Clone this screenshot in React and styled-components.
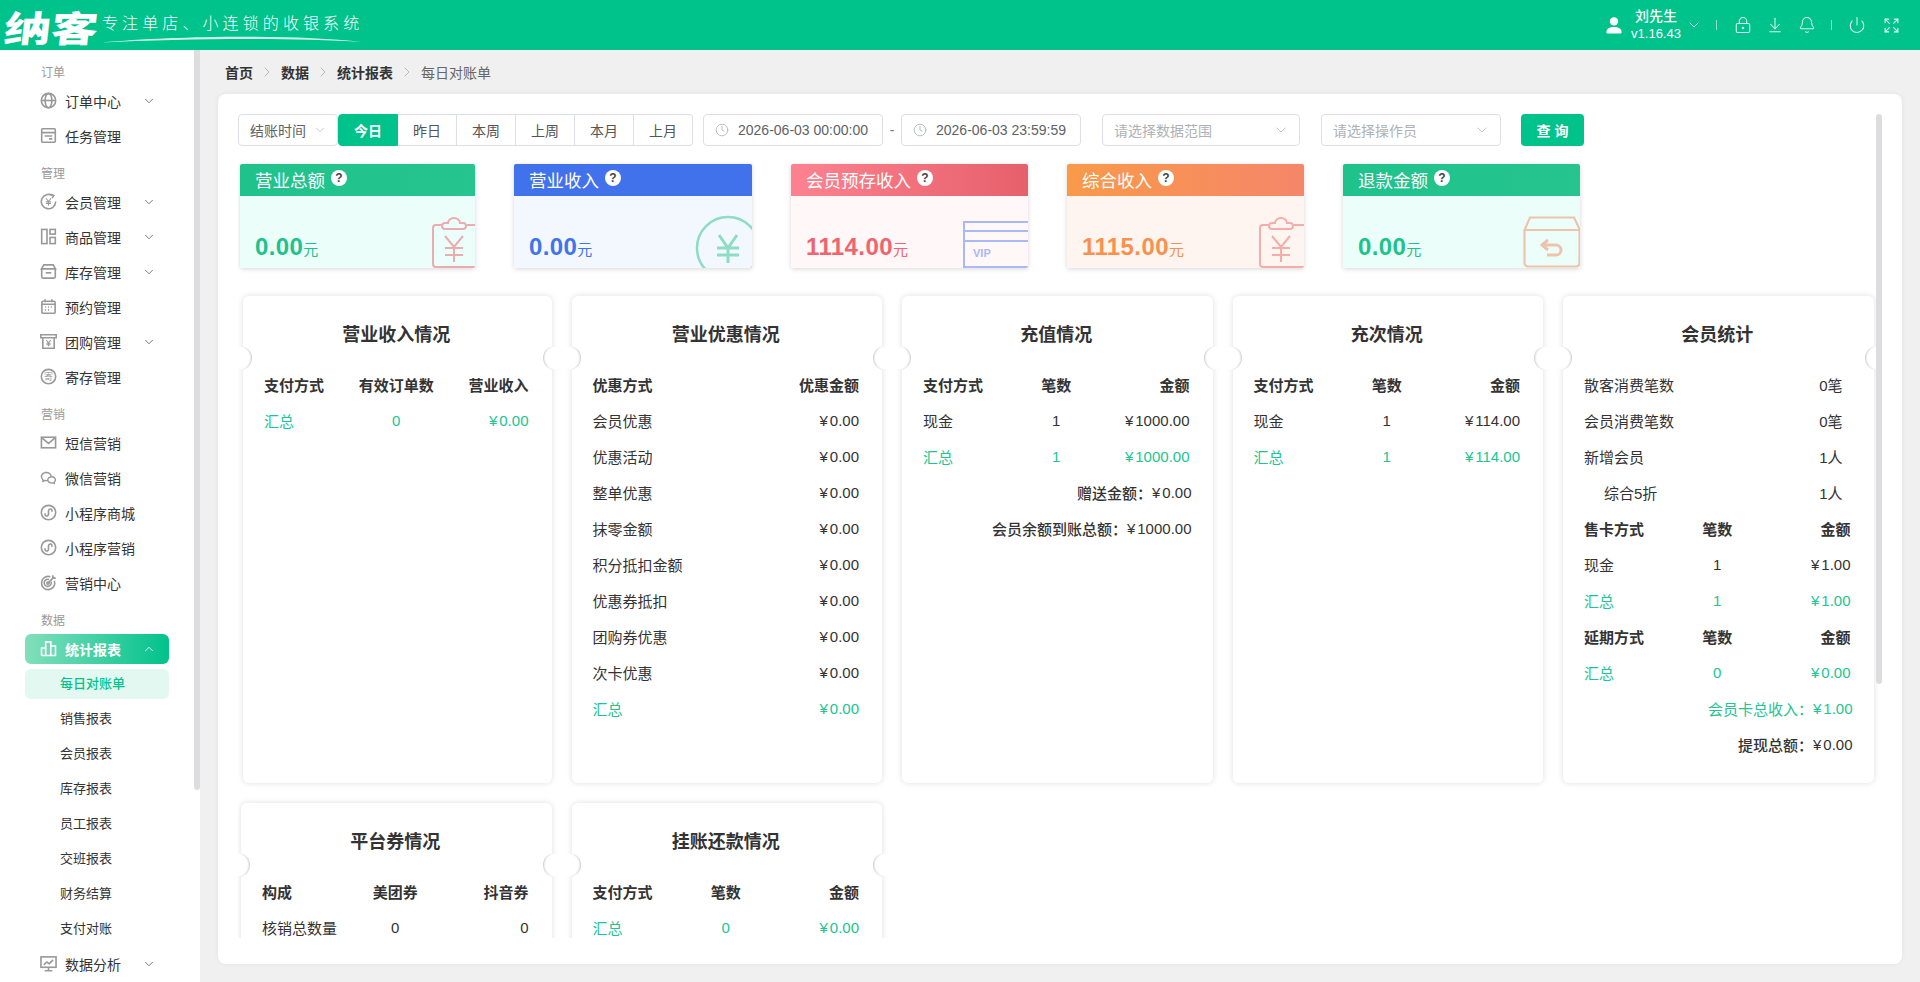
import React from 'react';
import styled, { createGlobalStyle } from 'styled-components';
import {
  ArrowDownToLine,
  Bell,
  ChevronDown,
  ChevronRight,
  ChevronUp,
  Clock,
  Expand,
  LockKeyhole,
  Power,
} from 'lucide-react';
import { RiWechatLine } from 'react-icons/ri';

const GREEN = '#00c28b';
const TEXT_GREEN = '#20c592';

const GlobalStyle = createGlobalStyle`
  * {
    box-sizing: border-box;
  }
  html, body {
    margin: 0;
    padding: 0;
    height: 100%;
    overflow: hidden;
  }
  body {
    font-family: "Liberation Sans", "Noto Sans CJK SC", sans-serif;
    font-size: 14px;
    color: #333;
    background: #f0f0f0;
  }
`;

/* ---------- sidebar icons ---------- */

const Glyph = styled.svg.attrs({ viewBox: '0 0 18 18', fill: 'none', stroke: 'currentColor' })`
  width: 17px;
  height: 17px;
  flex: none;
  stroke-width: 1.7;
`;

const UserGlyph = styled.svg.attrs({ viewBox: '0 0 16 17' })`
  width: 16px;
  height: 17px;
  flex: none;
  fill: #fff;
`;

const sideIcons = {
  globe: (
    <Glyph>
      <circle cx="9" cy="9" r="7.6" />
      <ellipse cx="9" cy="9" rx="3.6" ry="7.6" />
      <path d="M1.5 9H16.5" />
    </Glyph>
  ),
  task: (
    <Glyph>
      <rect x="1.8" y="1.8" width="14.4" height="14.4" rx="1" />
      <path d="M1.8 6H16.2M5 9.6H13M9.5 12.6H13" />
    </Glyph>
  ),
  member: (
    <Glyph>
      <path d="M13 2.6A7.6 7.6 0 1 0 16.6 9" />
      <path d="M11.6 1.2L14.6 2.8L12.8 5.4" />
      <path d="M6.4 5.6L9 9L11.6 5.6M9 9V13.4M6.4 9.4H11.6M6.4 11.2H11.6" strokeWidth="1.1" />
    </Glyph>
  ),
  goods: (
    <Glyph>
      <rect x="1.8" y="1.5" width="5.6" height="15" />
      <rect x="10.6" y="1.5" width="5.6" height="5" />
      <rect x="10.6" y="10" width="5.6" height="6.5" />
    </Glyph>
  ),
  stock: (
    <Glyph>
      <path d="M4 2H14L16.4 6.2H1.6Z" />
      <path d="M1.8 6.2V14.6A1.4 1.4 0 0 0 3.2 16H14.8A1.4 1.4 0 0 0 16.2 14.6V6.2" />
      <path d="M6 10.4H12" />
    </Glyph>
  ),
  calendar: (
    <Glyph>
      <rect x="2" y="3.4" width="14" height="12.8" rx="1.2" />
      <path d="M5.4 1.4V4.4M12.6 1.4V4.4M2 6.6H16" />
      <path d="M5.5 9.6H6.5M8.5 9.6H9.5M11.5 9.6H12.5M5.5 12.6H6.5M8.5 12.6H9.5" />
    </Glyph>
  ),
  group: (
    <Glyph>
      <path d="M0.8 1.8H17.2V5H0.8Z" />
      <path d="M3 5V16.2H15V5" />
      <path d="M6.6 7.4L9 10.4L11.4 7.4M9 10.4V14M6.8 10.8H11.2M6.8 12.4H11.2" strokeWidth="1.1" />
    </Glyph>
  ),
  deposit: (
    <Glyph>
      <circle cx="9" cy="9" r="7.6" />
      <text x="9" y="12.2" fontSize="9.5" textAnchor="middle" fill="currentColor" stroke="none">寄</text>
    </Glyph>
  ),
  mail: (
    <Glyph>
      <rect x="1.5" y="3.4" width="15" height="11.2" />
      <path d="M2 4L9 10L16 4" />
    </Glyph>
  ),
  mini: (
    <Glyph>
      <circle cx="9" cy="9" r="7.6" />
      <path d="M5.8 9.8C4.9 10.7 5.2 12.4 6.8 12.7C8.3 12.9 9 11.7 9 10.5V7.5C9 6.3 9.8 5.1 11.3 5.3C12.8 5.6 13.1 7.3 12.2 8.2" />
    </Glyph>
  ),
  target: (
    <Glyph>
      <path d="M15.2 7.2A7 7 0 1 1 11 3" />
      <path d="M11.8 8.2A3.8 3.8 0 1 1 9.6 5.8" />
      <circle cx="8.4" cy="9.6" r="1.2" />
      <path d="M8.4 9.6L15 3M13.6 1.4V4.4H16.6" />
    </Glyph>
  ),
  bars: (
    <Glyph>
      <path d="M1.6 16.4V8.4H6V16.4M6 16.4V2H11.4V16.4M11.4 16.4V6.4H16.4V16.4H1.6" />
    </Glyph>
  ),
  monitor: (
    <Glyph>
      <rect x="1" y="2" width="16" height="11" />
      <path d="M9 13V16.4M5 16.6H13M4 10.4L7.2 7.4L9.8 9.2L13.8 5.2" />
    </Glyph>
  ),
  wechat: <RiWechatLine size={20} />,
};

/* ---------- data ---------- */

const nav = [
  {
    label: '订单',
    items: [
      { icon: 'globe', text: '订单中心', arrow: true },
      { icon: 'task', text: '任务管理' },
    ],
  },
  {
    label: '管理',
    items: [
      { icon: 'member', text: '会员管理', arrow: true },
      { icon: 'goods', text: '商品管理', arrow: true },
      { icon: 'stock', text: '库存管理', arrow: true },
      { icon: 'calendar', text: '预约管理' },
      { icon: 'group', text: '团购管理', arrow: true },
      { icon: 'deposit', text: '寄存管理' },
    ],
  },
  {
    label: '营销',
    items: [
      { icon: 'mail', text: '短信营销' },
      { icon: 'wechat', text: '微信营销' },
      { icon: 'mini', text: '小程序商城' },
      { icon: 'mini', text: '小程序营销' },
      { icon: 'target', text: '营销中心' },
    ],
  },
];

const reportSubs = ['每日对账单', '销售报表', '会员报表', '库存报表', '员工报表', '交班报表', '财务结算', '支付对账'];

const stats = [
  { title: '营业总额', value: '0.00', head: 'linear-gradient(90deg,#20c28c,#26c48f)', body: '#ecfef9', color: '#20c28c', art: 'clip', tone: '#e9adb0' },
  { title: '营业收入', value: '0.00', head: '#4172eb', body: '#f3f8ff', color: '#3f74ee', art: 'coin', tone: '#8ddcc3' },
  { title: '会员预存收入', value: '1114.00', head: 'linear-gradient(90deg,#fd8290,#e6606b)', body: '#fff7f8', color: '#ee6570', art: 'vip', tone: '#a9b9f3' },
  { title: '综合收入', value: '1115.00', head: 'linear-gradient(90deg,#f99a49,#f5866a)', body: '#fff5f0', color: '#f8914f', art: 'clip', tone: '#f3aeaa' },
  { title: '退款金额', value: '0.00', head: 'linear-gradient(90deg,#20c28c,#26c48f)', body: '#ecfef9', color: '#20c28c', art: 'box', tone: '#eec3ab' },
];

/* ---------- small parts ---------- */

const Money = ({ children }) => (
  <>
    <Yen>¥</Yen>
    {children}
  </>
);

const StatArt = ({ kind, tone }) => {
  if (kind === 'clip') {
    return (
      <ArtSvg $left={192} $top={53} width="50" height="52" viewBox="0 0 50 52" stroke={tone}>
        <path d="M10 8H4A3 3 0 0 0 1 11V47A3 3 0 0 0 4 50H46A3 3 0 0 0 49 47V11A3 3 0 0 0 46 8H35" />
        <path d="M13 6H16A6 5 0 0 1 28 6H31A3 3 0 0 1 31 12H13A3 3 0 0 1 13 6Z" />
        <path d="M13 19L22 30L31 19M22 30V45M13 31H31M13 38H31" />
      </ArtSvg>
    );
  }
  if (kind === 'coin') {
    return (
      <ArtSvg $left={181} $top={51} width="66" height="66" viewBox="0 0 66 66" stroke={tone} $weight={2.5}>
        <circle cx="33" cy="33" r="31" />
        <path d="M24 20L33 33L42 20M33 33V48M22 33H44M22 40H44" strokeWidth="3" />
      </ArtSvg>
    );
  }
  if (kind === 'vip') {
    return (
      <ArtSvg $left={172} $top={57} width="70" height="48" viewBox="0 0 70 48" stroke={tone}>
        <rect x="1" y="1" width="90" height="45" />
        <path d="M1 10H70M1 20H70" />
        <text x="10" y="36" fontSize="11" fontWeight="700" fill={tone} stroke="none">VIP</text>
      </ArtSvg>
    );
  }
  return (
    <ArtSvg $left={180} $top={52} width="60" height="52" viewBox="0 0 60 52" stroke={tone} $weight={2.2}>
      <path d="M7 1.5H51L57 14H1.5Z" />
      <path d="M1.5 14V47A3.5 3.5 0 0 0 5 50.5H53A3.5 3.5 0 0 0 56.5 47V14" />
      <path d="M25 24L19 29L25 34M19 29H33A5 5 0 0 1 33 39H24" strokeWidth="3" />
    </ArtSvg>
  );
};

const Table = ({ rows, columns = 3 }) => (
  <div>
    {rows.map((row, i) => (
      <Row key={i} $columns={columns} $head={row.head} $total={row.total}>
        {row.cells.map((cell, j) => (
          <Cell key={j} $columns={columns} $index={j}>
            {cell}
          </Cell>
        ))}
      </Row>
    ))}
  </div>
);

/* ---------- page ---------- */

export default function App() {
  return (
    <Page>
      <GlobalStyle />
      <TopBar>
        <Brand>
          <BrandName>纳客</BrandName>
          <Slogan>
            专注单店、小连锁的收银系统
            <Swoosh viewBox="0 0 260 8" preserveAspectRatio="none">
              <path d="M0 7.5C70 1 190 -1 260 7C190 2.5 80 3.5 0 7.5Z" />
            </Swoosh>
          </Slogan>
        </Brand>
        <UserArea>
          <UserGlyph>
            <circle cx="8" cy="4.4" r="4.2" />
            <path d="M0.4 15.2C0.4 11.4 3.6 10 8 10C12.4 10 15.6 11.4 15.6 15.2C15.6 16.2 15 16.6 14 16.6H2C1 16.6 0.4 16.2 0.4 15.2Z" />
          </UserGlyph>
          <UserName>
            <strong>刘先生</strong>
            <span>v1.16.43</span>
          </UserName>
          <ChevronDown size={16} strokeWidth={1.5} color="#e6fbf4" />
          <TopDivider $left={14} />
          <TopIcons>
            <LockKeyhole size={18} strokeWidth={1.4} />
            <ArrowDownToLine size={18} strokeWidth={1.4} />
            <Bell size={18} strokeWidth={1.4} />
          </TopIcons>
          <TopDivider $left={15} $right={16} />
          <TopIcons $wide>
            <Power size={18} strokeWidth={1.4} />
            <Expand size={17} strokeWidth={1.6} />
          </TopIcons>
        </UserArea>
      </TopBar>

      <Body>
        <Sidebar>
          {nav.map((group) => (
            <React.Fragment key={group.label}>
              <GroupLabel>{group.label}</GroupLabel>
              {group.items.map((item) => (
                <NavRow key={item.text}>
                  <NavPill>
                    <NavIcon>{sideIcons[item.icon]}</NavIcon>
                    <NavText>{item.text}</NavText>
                    {item.arrow && <ChevronDown size={14} strokeWidth={1.5} color="#666" />}
                  </NavPill>
                </NavRow>
              ))}
            </React.Fragment>
          ))}
          <GroupLabel>数据</GroupLabel>
          <NavRow>
            <NavPill $active>
              <NavIcon $active>{sideIcons.bars}</NavIcon>
              <NavText>统计报表</NavText>
              <ChevronUp size={14} strokeWidth={1.5} />
            </NavPill>
          </NavRow>
          {reportSubs.map((text, i) => (
            <NavRow key={text}>
              <SubPill $active={i === 0}>{text}</SubPill>
            </NavRow>
          ))}
          <NavRow>
            <NavPill>
              <NavIcon>{sideIcons.monitor}</NavIcon>
              <NavText>数据分析</NavText>
              <ChevronDown size={14} strokeWidth={1.5} color="#666" />
            </NavPill>
          </NavRow>
        </Sidebar>

        <Main>
          <Crumbs>
            <b>首页</b>
            <ChevronRight size={16} strokeWidth={1.2} />
            <b>数据</b>
            <ChevronRight size={16} strokeWidth={1.2} />
            <b>统计报表</b>
            <ChevronRight size={16} strokeWidth={1.2} />
            <span>每日对账单</span>
          </Crumbs>

          <Panel>
            <PanelThumb />
            <ScrollArea>
              <Filters>
                <Field $width={100}>
                  结账时间
                  <ChevronDown size={14} strokeWidth={1.2} color="#b0b3b8" />
                </Field>
                <Tabs>
                  {['今日', '昨日', '本周', '上周', '本月', '上月'].map((t, i) => (
                    <Tab key={t} $active={i === 0}>
                      {t}
                    </Tab>
                  ))}
                </Tabs>
                <DateField>
                  <Clock size={14} strokeWidth={1.3} color="#a8abb2" />
                  2026-06-03 00:00:00
                </DateField>
                <Dash>-</Dash>
                <DateField>
                  <Clock size={14} strokeWidth={1.3} color="#a8abb2" />
                  2026-06-03 23:59:59
                </DateField>
                <Field $width={198} $placeholder $gap={21}>
                  请选择数据范围
                  <ChevronDown size={16} strokeWidth={1.1} color="#a8abb2" />
                </Field>
                <Field $width={180} $placeholder $gap={21}>
                  请选择操作员
                  <ChevronDown size={16} strokeWidth={1.1} color="#a8abb2" />
                </Field>
                <QueryButton>查 询</QueryButton>
              </Filters>

              <StatRow>
                {stats.map((s) => (
                  <StatCard key={s.title}>
                    <StatHead $bg={s.head}>
                      {s.title}
                      <Help>?</Help>
                    </StatHead>
                    <StatBody $bg={s.body}>
                      <StatValue $color={s.color}>
                        {s.value}
                        <small>元</small>
                      </StatValue>
                      <StatArt kind={s.art} tone={s.tone} />
                    </StatBody>
                  </StatCard>
                ))}
              </StatRow>

              <Tickets>
                <Ticket $nudge>
                  <TicketTitle>营业收入情况</TicketTitle>
                  <Table
                    rows={[
                      { head: true, cells: ['支付方式', '有效订单数', '营业收入'] },
                      { total: true, cells: ['汇总', '0', <Money>0.00</Money>] },
                    ]}
                  />
                </Ticket>

                <Ticket>
                  <TicketTitle>营业优惠情况</TicketTitle>
                  <Table
                    columns={2}
                    rows={[
                      { head: true, cells: ['优惠方式', '优惠金额'] },
                      ...['会员优惠', '优惠活动', '整单优惠', '抹零金额', '积分抵扣金额', '优惠券抵扣', '团购券优惠', '次卡优惠'].map((name) => ({
                        cells: [name, <Money>0.00</Money>],
                      })),
                      { total: true, cells: ['汇总', <Money>0.00</Money>] },
                    ]}
                  />
                </Ticket>

                <Ticket>
                  <TicketTitle>充值情况</TicketTitle>
                  <Table
                    rows={[
                      { head: true, cells: ['支付方式', '笔数', '金额'] },
                      { cells: ['现金', '1', <Money>1000.00</Money>] },
                      { total: true, cells: ['汇总', '1', <Money>1000.00</Money>] },
                    ]}
                  />
                  <Summary $strong>
                    赠送金额：
                    <Money>0.00</Money>
                  </Summary>
                  <Summary $strong>
                    会员余额到账总额：
                    <Money>1000.00</Money>
                  </Summary>
                </Ticket>

                <Ticket>
                  <TicketTitle>充次情况</TicketTitle>
                  <Table
                    rows={[
                      { head: true, cells: ['支付方式', '笔数', '金额'] },
                      { cells: ['现金', '1', <Money>114.00</Money>] },
                      { total: true, cells: ['汇总', '1', <Money>114.00</Money>] },
                    ]}
                  />
                </Ticket>

                <Ticket>
                  <TicketTitle>会员统计</TicketTitle>
                  <MemberLine>
                    散客消费笔数<span>0笔</span>
                  </MemberLine>
                  <MemberLine>
                    会员消费笔数<span>0笔</span>
                  </MemberLine>
                  <MemberLine>
                    新增会员<span>1人</span>
                  </MemberLine>
                  <MemberLine $indent>
                    综合5折<span>1人</span>
                  </MemberLine>
                  <Table
                    rows={[
                      { head: true, cells: ['售卡方式', '笔数', '金额'] },
                      { cells: ['现金', '1', <Money>1.00</Money>] },
                      { total: true, cells: ['汇总', '1', <Money>1.00</Money>] },
                      { head: true, cells: ['延期方式', '笔数', '金额'] },
                      { total: true, cells: ['汇总', '0', <Money>0.00</Money>] },
                    ]}
                  />
                  <Summary $green>
                    会员卡总收入：
                    <Money>1.00</Money>
                  </Summary>
                  <Summary $strong>
                    提现总额：
                    <Money>0.00</Money>
                  </Summary>
                </Ticket>

                <Ticket>
                  <TicketTitle>平台券情况</TicketTitle>
                  <Table
                    rows={[
                      { head: true, cells: ['构成', '美团券', '抖音券'] },
                      { cells: ['核销总数量', '0', '0'] },
                    ]}
                  />
                </Ticket>

                <Ticket>
                  <TicketTitle>挂账还款情况</TicketTitle>
                  <Table
                    rows={[
                      { head: true, cells: ['支付方式', '笔数', '金额'] },
                      { total: true, cells: ['汇总', '0', <Money>0.00</Money>] },
                    ]}
                  />
                </Ticket>
              </Tickets>
            </ScrollArea>
          </Panel>
        </Main>
      </Body>
    </Page>
  );
}

/* ---------- styles ---------- */

const Page = styled.div`
  height: 100vh;
  display: flex;
  flex-direction: column;
  overflow: hidden;
`;

const TopBar = styled.header`
  height: 50px;
  flex: none;
  background: ${GREEN};
  color: #fff;
  display: flex;
  align-items: center;
  justify-content: space-between;
  padding: 0 20px 0 5px;
`;

const Brand = styled.div`
  display: flex;
  align-items: flex-start;
`;

const BrandName = styled.div`
  width: 97px;
  height: 50px;
  font-family: "Noto Sans CJK SC", sans-serif;
  font-size: 36px;
  font-weight: 900;
  line-height: 53px;
  white-space: nowrap;
  transform-origin: left center;
  transform: scaleX(1.3) skewX(-5deg);
`;

const Slogan = styled.div`
  position: relative;
  height: 50px;
  width: 262px;
  font-family: "Noto Sans CJK SC", sans-serif;
  font-size: 16px;
  font-weight: 300;
  letter-spacing: 4.1px;
  line-height: 45px;
  white-space: nowrap;
`;

const Swoosh = styled.svg`
  position: absolute;
  left: 0;
  top: 35px;
  width: 260px;
  height: 8px;
  fill: #d8f7ec;
`;

const UserArea = styled.div`
  display: flex;
  align-items: center;
`;

const UserName = styled.div`
  width: 50px;
  margin: 0 5px 0 9px;
  display: flex;
  flex-direction: column;
  align-items: center;
  line-height: 17px;
  font-size: 13px;
  white-space: nowrap;
  strong {
    font-size: 14px;
    font-weight: 500;
  }
`;

const TopDivider = styled.i`
  width: 1px;
  height: 10px;
  margin: 0 ${(p) => p.$right || 17}px 0 ${(p) => p.$left}px;
  background: rgba(255, 255, 255, 0.55);
`;

const TopIcons = styled.div`
  display: flex;
  align-items: center;
  gap: ${(p) => (p.$wide ? 17 : 14)}px;
  color: #d9f7ed;
`;

const Body = styled.div`
  flex: 1;
  display: flex;
  min-height: 0;
`;

const Sidebar = styled.aside`
  position: relative;
  width: 200px;
  flex: none;
  background: #fff;
  padding-top: 2px;
  overflow: hidden;
  &::after {
    content: '';
    position: absolute;
    right: 0;
    top: 0;
    width: 6px;
    height: 740px;
    background: #dddddf;
    border-radius: 0 0 3px 3px;
  }
`;

const GroupLabel = styled.div`
  height: 31px;
  padding: 11px 0 0 41px;
  font-size: 12px;
  line-height: 20px;
  color: #999;
`;

const NavRow = styled.div`
  height: 35px;
  padding-left: 25px;
  display: flex;
  align-items: center;
`;

const NavPill = styled.div`
  width: 144px;
  height: 30px;
  padding: 0 13px 0 15px;
  display: flex;
  align-items: center;
  border-radius: 6px;
  color: ${(p) => (p.$active ? '#fff' : '#333')};
  background: ${(p) => (p.$active ? `linear-gradient(90deg, #82dfbd, ${GREEN})` : 'transparent')};
  font-weight: ${(p) => (p.$active ? 700 : 400)};
`;

const NavIcon = styled.span`
  width: 17px;
  margin-right: 8px;
  display: flex;
  justify-content: center;
  flex: none;
  color: ${(p) => (p.$active ? '#fff' : '#999')};
`;

const NavText = styled.span`
  flex: 1;
  color: inherit;
  white-space: nowrap;
`;

const SubPill = styled.div`
  width: 144px;
  height: 30px;
  padding-left: 35px;
  line-height: 30px;
  border-radius: 6px;
  font-size: 13px;
  font-weight: ${(p) => (p.$active ? 500 : 400)};
  color: ${(p) => (p.$active ? GREEN : '#333')};
  background: ${(p) => (p.$active ? '#e3f8f0' : 'transparent')};
`;

const Main = styled.main`
  flex: 1;
  min-width: 0;
  display: flex;
  flex-direction: column;
  padding: 0 18px 18px;
`;

const Crumbs = styled.nav`
  height: 44px;
  flex: none;
  padding-left: 7px;
  display: flex;
  align-items: center;
  gap: 6px;
  color: #aaa;
  b {
    color: #333;
    font-weight: 700;
  }
  span {
    color: #666;
  }
`;

const Panel = styled.section`
  position: relative;
  flex: 1;
  min-height: 0;
  display: flex;
  flex-direction: column;
  padding: 20px 20px 26px;
  background: #fff;
  border-radius: 8px;
  box-shadow: 0 0 5px rgba(0, 0, 0, 0.06);
`;

const PanelThumb = styled.i`
  position: absolute;
  z-index: 3;
  top: 20px;
  right: 20px;
  width: 6px;
  height: 570px;
  background: #dddde0;
  border-radius: 3px;
`;

const ScrollArea = styled.div`
  flex: 1;
  min-height: 0;
  overflow: hidden;
`;

const Filters = styled.div`
  height: 32px;
  display: flex;
  align-items: stretch;
  color: #606266;
`;

const Field = styled.div`
  width: ${(p) => p.$width}px;
  margin-left: ${(p) => p.$gap || 0}px;
  flex: none;
  padding: 0 10px 0 11px;
  display: flex;
  align-items: center;
  justify-content: space-between;
  border: 1px solid #dcdfe6;
  border-radius: 4px;
  color: ${(p) => (p.$placeholder ? '#aeb1b6' : '#606266')};
  white-space: nowrap;
`;

const Tabs = styled.div`
  display: flex;
  flex: none;
  margin-right: 10px;
`;

const Tab = styled.div`
  width: ${(p) => (p.$active ? 60 : 59)}px;
  display: flex;
  align-items: center;
  justify-content: center;
  border: 1px solid ${(p) => (p.$active ? GREEN : '#dcdfe6')};
  border-left-width: ${(p) => (p.$active ? 1 : 0)}px;
  background: ${(p) => (p.$active ? GREEN : '#fff')};
  color: ${(p) => (p.$active ? '#fff' : '#555')};
  font-weight: ${(p) => (p.$active ? 700 : 400)};
  &:first-child {
    border-radius: 4px 0 0 4px;
  }
  &:last-child {
    border-radius: 0 4px 4px 0;
  }
`;

const DateField = styled.div`
  width: 180px;
  flex: none;
  padding-left: 11px;
  display: flex;
  align-items: center;
  gap: 9px;
  border: 1px solid #dcdfe6;
  border-radius: 4px;
  white-space: nowrap;
`;

const Dash = styled.span`
  width: 18px;
  flex: none;
  text-align: center;
  line-height: 32px;
  color: #777;
`;

const QueryButton = styled.button`
  width: 63px;
  margin-left: 20px;
  flex: none;
  border: 0;
  border-radius: 4px;
  background: ${GREEN};
  color: #fff;
  font: 700 14px "Liberation Sans", "Noto Sans CJK SC", sans-serif;
`;

const StatRow = styled.div`
  margin-top: 18px;
  padding-left: 2px;
  display: grid;
  grid-template-columns: 235px 238px repeat(3, 237px);
  column-gap: 39px;
`;

const StatCard = styled.div`
  height: 104px;
  display: flex;
  flex-direction: column;
  overflow: hidden;
  border-radius: 2px;
  box-shadow: 0 1px 5px rgba(0, 0, 0, 0.16);
`;

const StatHead = styled.div`
  height: 32px;
  flex: none;
  padding: 0 0 2px 15px;
  display: flex;
  align-items: center;
  background: ${(p) => p.$bg};
  color: #fff;
  font-size: 17.5px;
  white-space: nowrap;
`;

const Help = styled.span`
  width: 16px;
  height: 16px;
  margin: -3px 0 0 6px;
  border-radius: 50%;
  background: #fff;
  color: #444;
  font-size: 12px;
  font-weight: 700;
  line-height: 16px;
  text-align: center;
`;

const StatBody = styled.div`
  position: relative;
  flex: 1;
  padding: 0 0 4px 15px;
  display: flex;
  align-items: flex-end;
  background: ${(p) => p.$bg};
`;

const StatValue = styled.div`
  color: ${(p) => p.$color};
  font-size: 24px;
  font-weight: 700;
  letter-spacing: 0.4px;
  line-height: 28px;
  small {
    font-size: 15px;
    font-weight: 400;
    letter-spacing: 0;
  }
`;

const ArtSvg = styled.svg`
  position: absolute;
  left: ${(p) => p.$left}px;
  top: ${(p) => p.$top - 32}px;
  fill: none;
  stroke-width: ${(p) => p.$weight || 2};
`;

const Tickets = styled.div`
  margin-top: 28px;
  padding-left: 3px;
  display: grid;
  grid-template-columns: repeat(5, 310.5px);
  column-gap: 20px;
  row-gap: 20px;
`;

const Ticket = styled.article`
  position: relative;
  min-height: 487px;
  margin-left: ${(p) => (p.$nudge ? 2 : 0)}px;
  padding: 0 23px 0 21px;
  background: #fff;
  border-radius: 6px;
  box-shadow: 0 0 6px rgba(0, 0, 0, 0.13);
  &::before,
  &::after {
    content: '';
    position: absolute;
    top: 50px;
    width: 24px;
    height: 24px;
    border-radius: 50%;
    background: #fff;
  }
  &::before {
    left: -15px;
    box-shadow: inset -2px 0 2px -1px rgba(0, 0, 0, 0.22);
  }
  &::after {
    right: -15px;
    box-shadow: inset 2px 0 2px -1px rgba(0, 0, 0, 0.22);
  }
`;

const TicketTitle = styled.h3`
  margin: 0;
  padding: 27px 0 19px;
  font-size: 18px;
  font-weight: 700;
  line-height: 24px;
  text-align: center;
  color: #333;
`;

const Row = styled.div`
  height: 36px;
  display: grid;
  grid-template-columns: repeat(${(p) => p.$columns}, 1fr);
  align-items: center;
  font-size: 15px;
  font-weight: ${(p) => (p.$head ? 700 : 400)};
  color: ${(p) => (p.$total ? TEXT_GREEN : '#333')};
  white-space: nowrap;
`;

const Cell = styled.div`
  text-align: ${(p) => (p.$index === 0 ? 'left' : p.$index === p.$columns - 1 ? 'right' : 'center')};
`;

const Yen = styled.span`
  margin-right: 2px;
`;

const Summary = styled.div`
  height: 36px;
  margin-right: -2px;
  display: flex;
  align-items: center;
  justify-content: flex-end;
  font-size: 15px;
  font-weight: ${(p) => (p.$strong ? 500 : 400)};
  color: ${(p) => (p.$green ? TEXT_GREEN : '#333')};
  white-space: nowrap;
`;

const MemberLine = styled.div`
  height: 36px;
  padding: 0 8px 0 ${(p) => (p.$indent ? 20 : 0)}px;
  display: flex;
  align-items: center;
  justify-content: space-between;
  font-size: 15px;
  color: #333;
`;
